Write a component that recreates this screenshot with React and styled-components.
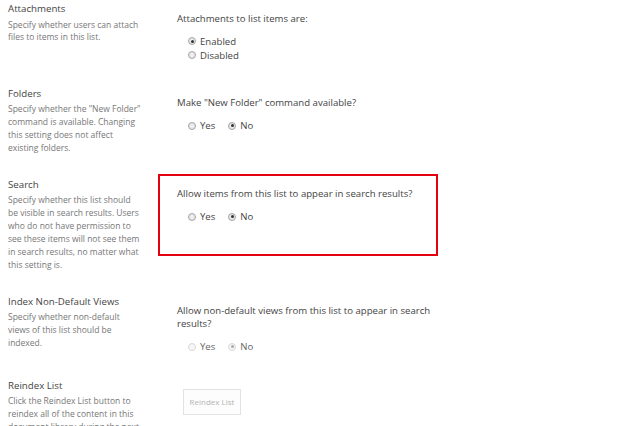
import React from 'react';
import styled, { createGlobalStyle } from 'styled-components';

const GlobalStyle = createGlobalStyle`
    body {
        margin: 0;
        background: #fff;
        font-family: "Open Sans", "Noto Sans", sans-serif;
    }
`;

const Page = styled.div`
    display: flex;
    flex-direction: column;
    margin-top: -2px;
`;

const Section = styled.div`
    display: grid;
    grid-template-columns: 158px 280px;
    align-items: start;
    padding-bottom: 18.8px;
`;

const Info = styled.div`
    padding: 4px 16.3px 0 8px;
`;

const Title = styled.div`
    font-size: 9.7px;
    line-height: 14px;
    color: #444;
    margin-bottom: 2.5px;
`;

const Desc = styled.div`
    font-size: 8.5px;
    line-height: 12.95px;
    color: #777;
`;

const Control = styled.div`
    border: 2px solid ${(p) => (p.highlight ? '#e3000f' : 'transparent')};
    padding: 11.5px 4px ${(p) => (p.highlight ? '30px' : '0')} 17px;
`;

const Label = styled.div`
    font-size: 9.6px;
    line-height: 13px;
    color: #444;
`;

const RadioGroup = styled.div`
    display: flex;
    flex-direction: ${(p) => (p.vertical ? 'column' : 'row')};
    column-gap: 13px;
    margin-top: 9.5px;
    padding-left: 11px;
`;

const Option = styled.label`
    display: flex;
    align-items: center;
    gap: 4px;
    height: 14px;
    font-size: 9.6px;
    color: ${(p) => (p.disabled ? '#666' : '#444')};
`;

const Radio = styled.span`
    width: 8px;
    height: 8px;
    box-sizing: border-box;
    border-radius: 50%;
    border: 1px solid ${(p) => (p.disabled ? '#d8d8d8' : '#a6a6a6')};
    background: ${(p) => (p.disabled ? '#f6f6f6' : 'radial-gradient(circle, #f4f4f4 0%, #dcdcdc 100%)')};
    display: flex;
    align-items: center;
    justify-content: center;

    &::after {
        content: '';
        width: 3px;
        height: 3px;
        border-radius: 50%;
        background: ${(p) => (p.checked ? (p.disabled ? '#aaa' : '#333') : 'transparent')};
    }
`;

const Button = styled.button`
    margin: 0 0 0 6px;
    width: 58px;
    height: 26px;
    border: 1px solid #e2e2e2;
    background: #fdfdfd;
    color: #b5b5b5;
    font-family: inherit;
    font-size: 8px;
    padding: 0;
`;

const RadioSet = ({ options, value, vertical, disabled }) => (
    <RadioGroup vertical={vertical}>
        {options.map((o) => (
            <Option key={o} disabled={disabled}>
                <Radio checked={o === value} disabled={disabled} />
                {o}
            </Option>
        ))}
    </RadioGroup>
);

export default function App() {
    return (
        <>
            <GlobalStyle />
            <Page>
                <Section>
                    <Info>
                        <Title>Attachments</Title>
                        <Desc>Specify whether users can attach files to items in this list.</Desc>
                    </Info>
                    <Control>
                        <Label>Attachments to list items are:</Label>
                        <RadioSet vertical options={['Enabled', 'Disabled']} value="Enabled" />
                    </Control>
                </Section>
                <Section>
                    <Info>
                        <Title>Folders</Title>
                        <Desc>
                            Specify whether the "New Folder" command is available. Changing this setting does not affect
                            existing folders.
                        </Desc>
                    </Info>
                    <Control>
                        <Label>Make "New Folder" command available?</Label>
                        <RadioSet options={['Yes', 'No']} value="No" />
                    </Control>
                </Section>
                <Section>
                    <Info>
                        <Title>Search</Title>
                        <Desc>
                            Specify whether this list should be visible in search results. Users who do not have
                            permission to see these items will not see them in search results, no matter what this
                            setting is.
                        </Desc>
                    </Info>
                    <Control highlight>
                        <Label>Allow items from this list to appear in search results?</Label>
                        <RadioSet options={['Yes', 'No']} value="No" />
                    </Control>
                </Section>
                <Section>
                    <Info>
                        <Title>Index Non-Default Views</Title>
                        <Desc>Specify whether non-default views of this list should be indexed.</Desc>
                    </Info>
                    <Control>
                        <Label>Allow non-default views from this list to appear in search results?</Label>
                        <RadioSet disabled options={['Yes', 'No']} value="No" />
                    </Control>
                </Section>
                <Section>
                    <Info>
                        <Title>Reindex List</Title>
                        <Desc>
                            Click the Reindex List button to reindex all of the content in this document library during
                            the next scheduled crawl.
                        </Desc>
                    </Info>
                    <Control>
                        <Button disabled>Reindex List</Button>
                    </Control>
                </Section>
            </Page>
        </>
    );
}
